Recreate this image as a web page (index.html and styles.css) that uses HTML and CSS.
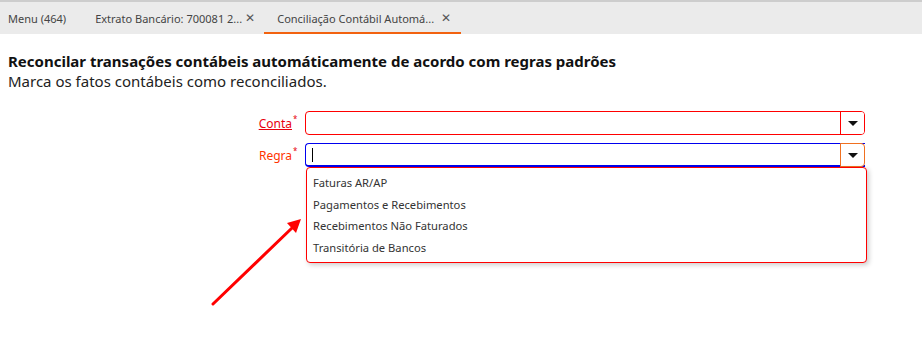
FILE: index.html
```html
<!DOCTYPE html>
<html lang="pt">
<head>
    <meta charset="UTF-8">
    <title>Conciliação Contábil Automática</title>
    <link rel="stylesheet" href="styles.css">
</head>
<body>

<!-- Tabs -->
<div class="tabs">
    <div class="tab">Menu (464)</div>
    <div class="tab">Extrato Bancário: 700081 2...<span class="close">&#x2715;</span></div>
    <div class="tab active">Conciliação Contábil Automá...<span class="close">&#x2715;</span></div>
</div>

<div class="page">
    <h1>Reconcilar transações contábeis automáticamente de acordo com regras padrões</h1>
    <p class="subtitle">Marca os fatos contábeis como reconciliados.</p>

    <form class="form">
        <div class="row">
            <label class="label link">Conta</label><span class="req">*</span>
            <div class="combo">
                <input type="text" class="combo-input">
                <button type="button" class="combo-btn"><span class="caret"></span></button>
            </div>
        </div>
        <div class="row">
            <label class="label warn">Regra</label><span class="req">*</span>
            <div class="combo focused">
                <input type="text" class="combo-input">
                <span class="cursor"></span>
                <button type="button" class="combo-btn"><span class="caret"></span></button>
                <ul class="list">
                    <li>Faturas AR/AP</li>
                    <li>Pagamentos e Recebimentos</li>
                    <li>Recebimentos Não Faturados</li>
                    <li>Transitória de Bancos</li>
                </ul>
            </div>
        </div>
    </form>
</div>

<!-- annotation arrow -->
<svg class="arrow" width="922" height="346" viewBox="0 0 922 346">
    <line x1="213" y1="304" x2="292" y2="228" stroke="#f00" stroke-width="3" stroke-linecap="round"/>
    <polygon points="301,219 287,223 296,233" fill="#f00"/>
</svg>

</body>
</html>
```

FILE: styles.css
```css
body {
    margin: 0;
    font-family: "Noto Sans", "Open Sans", sans-serif;
    color: #222;
    background: #fff;
    position: relative;
    height: 346px;
    overflow: hidden;
}
.tabs {
    display: flex;
    height: 32px;
    background: #ebebeb;
    border-top: 2px solid #cdcdcd;
}
.tab {
    position: relative;
    padding: 0 14px 0 8px;
    margin-right: 7px;
    font-size: 11px;
    line-height: 33px;
    color: #444;
    white-space: nowrap;
}
.tab:nth-child(2) {
    padding-right: 22px;
    margin-right: 0;
}
.tab.active {
    border-bottom: 2px solid #f2620f;
    height: 30px;
    padding-left: 13px;
    padding-right: 27px;
}
.close {
    position: absolute;
    right: 9px;
    top: -1px;
    font-size: 12px;
    color: #555;
}
.tab.active .close {
    right: 10px;
}
.page {
    padding: 17px 8px 0;
}
h1 {
    margin: 0;
    font-size: 15px;
    font-weight: bold;
    color: #111;
    line-height: 20px;
}
.subtitle {
    margin: 0;
    font-size: 15px;
    line-height: 20px;
    color: #222;
}
.form {
    margin-top: 20px;
}
.row {
    display: flex;
    align-items: center;
    margin-bottom: 8px;
}
.label {
    width: 284px;
    text-align: right;
    font-size: 12px;
}
.link {
    color: #e8000d;
    text-decoration: underline;
}
.warn {
    color: #ff3300;
}
.req {
    align-self: flex-start;
    width: 12px;
    padding-left: 1px;
    color: #e8000d;
    font-size: 8px;
    margin-top: 2px;
}
.combo {
    position: relative;
    display: flex;
    width: 560px;
    height: 24px;
    box-sizing: border-box;
    border: 1px solid #f00;
    border-radius: 4px;
}
.combo.focused {
    border-color: #0000ee;
    border-width: 1px 0 2px 1px;
    border-radius: 4px 0 0 4px;
}
.combo-input {
    flex: 1;
    border: none;
    outline: none;
    background: transparent;
    padding: 0 6px;
}
.cursor {
    position: absolute;
    left: 6px;
    top: 4px;
    width: 1px;
    height: 14px;
    background: #000;
}
.combo-btn {
    width: 24px;
    padding: 0;
    border: none;
    border-left: 1px solid #f00;
    background: #fff;
    border-radius: 0 3px 3px 0;
    cursor: pointer;
}
.focused .combo-btn {
    border: 1px solid #f07020;
    margin: -1px 0 -2px 0;
    border-radius: 0 4px 4px 0;
    width: 25px;
}
.caret {
    display: inline-block;
    border-left: 5px solid transparent;
    border-right: 5px solid transparent;
    border-top: 5px solid #111;
    vertical-align: middle;
}
.list {
    position: absolute;
    left: 0;
    top: 23px;
    width: 561px;
    margin: 0;
    padding: 4px 0 4px;
    list-style: none;
    background: #fff;
    border: 1px solid #f00;
    border-radius: 4px;
    box-sizing: border-box;
    box-shadow: 2px 2px 5px rgba(0, 0, 0, 0.2);
}
.list li {
    padding: 0 6px;
    font-size: 11.2px;
    line-height: 21.5px;
    color: #333;
}
.arrow {
    position: absolute;
    left: 0;
    top: 0;
    pointer-events: none;
}
```
